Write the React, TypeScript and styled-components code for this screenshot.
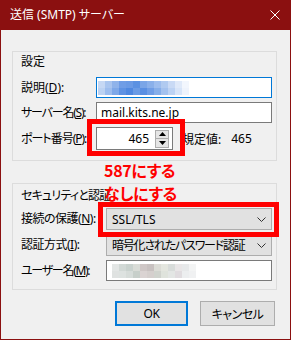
import React from 'react';
import styled, { createGlobalStyle } from 'styled-components';

const GlobalStyle = createGlobalStyle`
  html, body { margin: 0; padding: 0; background: #f0f0f0; }
  body {
    font-family: "Noto Sans", "Noto Sans CJK JP", sans-serif;
    font-size: 12px;
    color: #000;
    font-feature-settings: "palt";
  }
  * { box-sizing: border-box; }
`;

const Window = styled.div`
  position: relative;
  width: 291px;
  height: 340px;
  background: #f0f0f0;
  border: 1px solid #8b1010;
  border-top: none;
  display: flex;
  flex-direction: column;
`;

const TitleBar = styled.div`
  height: 30px;
  flex: none;
  background: #8b1010;
  color: #fff;
  display: flex;
  align-items: center;
  justify-content: space-between;
  padding: 0 10px 0 9px;
  font-size: 12px;
`;

const TitleText = styled.span`
  line-height: 16px;
`;

const Content = styled.div`
  padding: 21px 13px 0 11px;
  display: flex;
  flex-direction: column;
`;

const Group = styled.div<{ $mt?: number; $pt: number; $pb: number }>`
  border: 1px solid #dcdcdc;
  margin-top: ${(p) => p.$mt ?? 0}px;
  padding: ${(p) => p.$pt}px 4px ${(p) => p.$pb}px 8px;
  display: flex;
  flex-direction: column;
  gap: 4px;
`;

const GroupTitle = styled.div<{ $mb: number; $ls?: number }>`
  line-height: 16px;
  height: 16px;
  white-space: nowrap;
  letter-spacing: ${(p) => p.$ls ?? 0}px;
  margin-bottom: ${(p) => p.$mb}px;
`;

const Row = styled.div<{ $h: number }>`
  display: flex;
  align-items: center;
  height: ${(p) => p.$h}px;
`;

const Label = styled.div<{ $w: number; $ls?: number }>`
  width: ${(p) => p.$w}px;
  flex: none;
  white-space: nowrap;
  line-height: 16px;
  letter-spacing: ${(p) => p.$ls ?? -1}px;
`;

const TextBox = styled.div<{ $w: number; $focus?: boolean }>`
  width: ${(p) => p.$w}px;
  height: 100%;
  background: #fff;
  border: 1px solid ${(p) => (p.$focus ? '#0078d7' : '#7a7a7a')};
  display: flex;
  align-items: center;
  padding-left: 4px;
  overflow: hidden;
  white-space: nowrap;
`;

const BlurStrip = styled.div<{ $ml: number; $cell: number }>`
  display: grid;
  grid-auto-flow: column;
  grid-template-rows: repeat(2, ${(p) => p.$cell}px);
  grid-auto-columns: ${(p) => p.$cell}px;
  margin-left: ${(p) => p.$ml}px;
`;

const Cell = styled.div<{ $c: string }>`
  background: ${(p) => p.$c};
`;

const SpinBox = styled.div`
  width: 77px;
  height: 100%;
  background: #fff;
  border: 1px solid #7a7a7a;
  display: flex;
  align-items: center;
  justify-content: flex-end;
  padding-right: 3px;
`;

const SpinValue = styled.span`
  margin-right: 6px;
`;

const Spinner = styled.div`
  width: 14px;
  height: 18px;
  display: flex;
  flex-direction: column;
  border: 1px solid #adadad;
  background: #e5e5e5;
`;

const SpinHalf = styled.div<{ $top?: boolean }>`
  flex: 1;
  display: flex;
  align-items: center;
  justify-content: center;
  border-bottom: ${(p) => (p.$top ? '1px solid #adadad' : 'none')};
`;

const DefaultLabel = styled.div`
  margin-left: 9px;
  white-space: nowrap;
  display: flex;
`;

const DefaultValue = styled.span`
  margin-left: 10px;
`;

const Combo = styled.div`
  width: 166px;
  height: 100%;
  background: #e1e1e1;
  border: 1px solid #adadad;
  display: flex;
  align-items: center;
  justify-content: space-between;
  padding: 0 5px 0 5px;
  white-space: nowrap;
`;

const ComboText = styled.span`
  letter-spacing: -1.2px;
`;

const Buttons = styled.div`
  display: flex;
  justify-content: flex-end;
  gap: 12px;
  margin-top: 11px;
  padding-right: 2px;
`;

const Button = styled.div<{ $w: number; $default?: boolean }>`
  width: ${(p) => p.$w}px;
  height: 25px;
  background: #e1e1e1;
  border: ${(p) => (p.$default ? '2px solid #0078d7' : '1px solid #adadad')};
  display: flex;
  align-items: center;
  justify-content: center;
  letter-spacing: -0.5px;
`;

const RedBox = styled.div<{ $l: number; $t: number; $w: number; $h: number }>`
  position: absolute;
  left: ${(p) => p.$l}px;
  top: ${(p) => p.$t}px;
  width: ${(p) => p.$w}px;
  height: ${(p) => p.$h}px;
  border: 5px solid #ff0000;
`;

const Note = styled.div`
  position: absolute;
  left: 103px;
  top: 159px;
  color: #ff0000;
  font-family: "Noto Sans CJK JP", sans-serif;
  font-weight: 700;
  font-size: 16px;
  line-height: 23px;
  white-space: nowrap;
  letter-spacing: -0.3px;
`;

const Chevron = () => (
  <svg width="9" height="5" viewBox="0 0 9 5">
    <path d="M0.5 0.5 L4.5 4.5 L8.5 0.5" fill="none" stroke="#333" strokeWidth="1" />
  </svg>
);

const CloseIcon = () => (
  <svg width="10" height="10" viewBox="0 0 10 10">
    <path d="M0.5 0.5 L9.5 9.5 M9.5 0.5 L0.5 9.5" stroke="#fff" strokeWidth="1" />
  </svg>
);

const UpArrow = () => (
  <svg width="7" height="4" viewBox="0 0 7 4">
    <path d="M0 4 L3.5 0 L7 4 Z" fill="#000" />
  </svg>
);
const DownArrow = () => (
  <svg width="7" height="4" viewBox="0 0 7 4">
    <path d="M0 0 L3.5 4 L7 0 Z" fill="#000" />
  </svg>
);

const blueCells = [
  '#c6d8f4', '#bcd2f2',
  '#a9c5ef', '#9dbdee',
  '#8fb3ea', '#7ea8e8',
  '#6f9de6', '#5e92e3',
  '#6a9ae5', '#4f88e0',
  '#5b91e2', '#6a9be5',
  '#7aa5e7', '#5a8fe2',
  '#8ab0ea', '#6f9de6',
  '#9dbdee', '#86aee9',
  '#b0caf0', '#a3c1ee',
  '#c9daf5', '#bcd2f3',
  '#dfe9f9', '#d7e4f8',
  '#f2f6fd', '#eef3fc',
];

const grayCells = [
  '#e3e6e5', '#dfe2e1',
  '#d2d9d6', '#dde2e0',
  '#c9d2ce', '#d6dcd9',
  '#d9dcd7', '#c7cfca',
  '#cfc7c6', '#dad3d2',
  '#c8c1c0', '#d5cfcd',
  '#dcdcd6', '#d0d3cd',
  '#e4e6df', '#dfe3dc',
  '#d8dcda', '#e3e6e4',
  '#e9e6e7', '#e0dcdf',
  '#e7e9ea', '#eceeef',
  '#f3f4f4', '#f0f1f2',
];

export default function App() {
  return (
    <>
      <GlobalStyle />
      <Window>
        <TitleBar>
          <TitleText>送信 (SMTP) サーバー</TitleText>
          <CloseIcon />
        </TitleBar>
        <Content>
          <Group $pt={2} $pb={10}>
            <GroupTitle $mb={3}>設定</GroupTitle>
            <Row $h={21}>
              <Label $w={75} $ls={0}>説明(<u>D</u>):</Label>
              <TextBox $w={176} $focus>
                <BlurStrip $ml={-3} $cell={7}>
                  {blueCells.map((c, i) => (
                    <Cell key={i} $c={c} />
                  ))}
                </BlurStrip>
              </TextBox>
            </Row>
            <Row $h={21}>
              <Label $w={75} $ls={-1.2}>サーバー名(<u>S</u>):</Label>
              <TextBox $w={176}>mail.kits.ne.jp</TextBox>
            </Row>
            <Row $h={23}>
              <Label $w={75} $ls={-1}>ポート番号(<u>P</u>):</Label>
              <SpinBox>
                <SpinValue>465</SpinValue>
                <Spinner>
                  <SpinHalf $top>
                    <UpArrow />
                  </SpinHalf>
                  <SpinHalf>
                    <DownArrow />
                  </SpinHalf>
                </Spinner>
              </SpinBox>
              <DefaultLabel>
                規定値:<DefaultValue>465</DefaultValue>
              </DefaultLabel>
            </Row>
          </Group>
          <Group $mt={22} $pt={4} $pb={8}>
            <GroupTitle $mb={0} $ls={-0.8}>セキュリティと認証</GroupTitle>
            <Row $h={22}>
              <Label $w={85} $ls={-0.5}>接続の保護(<u>N</u>):</Label>
              <Combo>
                <span>SSL/TLS</span>
                <Chevron />
              </Combo>
            </Row>
            <Row $h={22}>
              <Label $w={85} $ls={-0.5}>認証方式(<u>I</u>):</Label>
              <Combo>
                <ComboText>暗号化されたパスワード認証</ComboText>
                <Chevron />
              </Combo>
            </Row>
            <Row $h={21}>
              <Label $w={85} $ls={-1.3}>ユーザー名(<u>M</u>):</Label>
              <TextBox $w={166}>
                <BlurStrip $ml={1} $cell={7}>
                  {grayCells.map((c, i) => (
                    <Cell key={i} $c={c} />
                  ))}
                </BlurStrip>
              </TextBox>
            </Row>
          </Group>
          <Buttons>
            <Button $w={73} $default>
              OK
            </Button>
            <Button $w={75}>キャンセル</Button>
          </Buttons>
        </Content>
        <RedBox $l={86} $t={119} $w={98} $h={37} />
        <RedBox $l={97} $t={202} $w={181} $h={35} />
        <Note>
          587にする
          <br />
          なしにする
        </Note>
      </Window>
    </>
  );
}
